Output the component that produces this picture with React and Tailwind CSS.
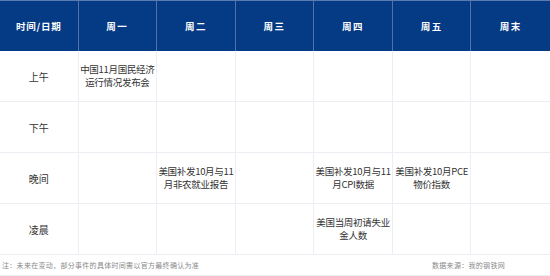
import React from 'react';

const days = ['周一', '周二', '周三', '周四', '周五', '周末'];

const rows = [
  { label: '上午', cells: [['中国11月国民经济', '运行情况发布会'], null, null, null, null, null] },
  { label: '下午', cells: [null, null, null, null, null, null] },
  {
    label: '晚间',
    cells: [null, ['美国补发10月与11', '月非农就业报告'], null, ['美国补发10月与11', '月CPI数据'], ['美国补发10月PCE', '物价指数'], null],
  },
  { label: '凌晨', cells: [null, null, null, ['美国当周初请失业', '金人数'], null, null] },
];

const App = () => {
  return (
    <div
      className="w-[550px] h-[276px] bg-white overflow-hidden"
      style={{ fontFamily: '"Noto Sans CJK SC", "Noto Sans", sans-serif' }}
    >
      {/* Header */}
      <div className="grid grid-cols-7 h-[51px] bg-[#053a84] border-t border-[#5a7bb0]">
        <div className="flex items-center justify-center border-r border-[#4f72aa] text-white text-[9.5px] font-semibold tracking-[0.8px]">
          时间/日期
        </div>
        {days.map((d, i) => (
          <div
            key={d}
            className={`flex items-center justify-center text-white text-[9.5px] font-semibold tracking-[1.5px] ${
              i < days.length - 1 ? 'border-r border-[#4f72aa]' : ''
            }`}
          >
            {d}
          </div>
        ))}
      </div>

      {/* Body */}
      {rows.map((row) => (
        <div key={row.label} className="grid grid-cols-7 h-[51px] border-b border-[#eceef3]">
          <div className="flex items-center justify-center border-r border-[#eceef3] text-[10px] text-[#333]">
            {row.label}
          </div>
          {row.cells.map((c, i) => (
            <div
              key={i}
              className={`flex flex-col items-center justify-center text-[9.5px] leading-[13px] text-[#333] tracking-[-0.3px] ${
                i < row.cells.length - 1 ? 'border-r border-[#eceef3]' : ''
              }`}
            >
              {c && c.map((line) => <span key={line} className="whitespace-nowrap">{line}</span>)}
            </div>
          ))}
        </div>
      ))}

      {/* Footer */}
      <div className="flex items-center justify-between h-[21px] pl-[2px] pr-[45px] border-b border-[#eceef3] text-[7px] text-[#8a8a8a] tracking-[0.3px]">
        <span>注：未来在变动，部分事件的具体时间需以官方最终确认为准</span>
        <span>数据来源：我的钢铁网</span>
      </div>
    </div>
  );
};

export default App;
